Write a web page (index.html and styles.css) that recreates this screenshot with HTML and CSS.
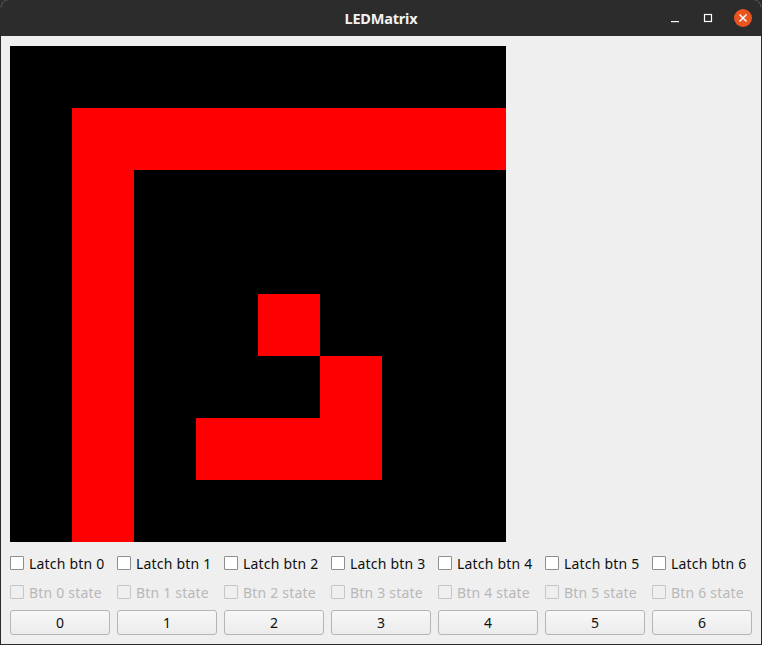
FILE: index.html
```html
<!DOCTYPE html>
<html>
<head>
<meta charset="utf-8">
<link rel="stylesheet" href="styles.css">
</head>
<body>
<div class="window">
  <div class="titlebar">
    <div class="title">LEDMatrix</div>
    <div class="controls">
      <svg class="ctl" width="16" height="16" viewBox="0 0 16 16"><rect x="4" y="11" width="8" height="1.2" fill="#fff"/></svg>
      <svg class="ctl" width="16" height="16" viewBox="0 0 16 16"><rect x="4.5" y="4.5" width="7" height="7" fill="none" stroke="#fff" stroke-width="1.2"/></svg>
      <svg class="ctl close" width="20" height="20" viewBox="0 0 20 20"><circle cx="10" cy="10" r="9" fill="#e95420"/><path d="M6.5 6.5 L13.5 13.5 M13.5 6.5 L6.5 13.5" stroke="#fff" stroke-width="1.5"/></svg>
    </div>
  </div>
  <div class="content">
    <div class="matrix" id="matrix"></div>
    <div class="row latch">
      <label class="cb"><span class="box"></span>Latch btn 0</label>
      <label class="cb"><span class="box"></span>Latch btn 1</label>
      <label class="cb"><span class="box"></span>Latch btn 2</label>
      <label class="cb"><span class="box"></span>Latch btn 3</label>
      <label class="cb"><span class="box"></span>Latch btn 4</label>
      <label class="cb"><span class="box"></span>Latch btn 5</label>
      <label class="cb"><span class="box"></span>Latch btn 6</label>
    </div>
    <div class="row state">
      <label class="cb dis"><span class="box"></span>Btn 0 state</label>
      <label class="cb dis"><span class="box"></span>Btn 1 state</label>
      <label class="cb dis"><span class="box"></span>Btn 2 state</label>
      <label class="cb dis"><span class="box"></span>Btn 3 state</label>
      <label class="cb dis"><span class="box"></span>Btn 4 state</label>
      <label class="cb dis"><span class="box"></span>Btn 5 state</label>
      <label class="cb dis"><span class="box"></span>Btn 6 state</label>
    </div>
    <div class="row buttons">
      <button class="btn">0</button>
      <button class="btn">1</button>
      <button class="btn">2</button>
      <button class="btn">3</button>
      <button class="btn">4</button>
      <button class="btn">5</button>
      <button class="btn">6</button>
    </div>
  </div>
</div>
<script>
var on = [
  "00000000",
  "01111111",
  "01000000",
  "01000000",
  "01001000",
  "01000100",
  "01011100",
  "01000000"
];
var m = document.getElementById("matrix");
on.forEach(function (r) {
  for (var i = 0; i < 8; i++) {
    var d = document.createElement("div");
    d.className = "cell" + (r[i] === "1" ? " lit" : "");
    m.appendChild(d);
  }
});
</script>
</body>
</html>
```
FILE: styles.css
```css
html, body {
  margin: 0;
  padding: 0;
  background: #2c2c2c;
}
.window {
  width: 762px;
  height: 645px;
  box-sizing: border-box;
  background: #efefef;
  border: 1px solid #2a2a2a;
  border-top: none;
  border-radius: 8px 8px 0 0;
  overflow: hidden;
  font-family: "Noto Sans", "Open Sans", sans-serif;
}
.titlebar {
  height: 36px;
  background: #2c2c2c;
  position: relative;
  display: flex;
  align-items: center;
  justify-content: center;
}
.title {
  color: #f2f2f2;
  font-weight: bold;
  font-size: 14.5px;
  letter-spacing: -0.2px;
}
.controls {
  position: absolute;
  right: 8px;
  top: 8px;
  display: flex;
  align-items: center;
  gap: 17px;
}
.ctl { display: block; }
.content {
  padding: 10px 9px 0 9px;
}
.matrix {
  width: 496px;
  height: 496px;
  display: grid;
  grid-template-columns: repeat(8, 62px);
  grid-template-rows: repeat(8, 62px);
  background: #000;
}
.cell { background: #000; }
.cell.lit { background: #ff0000; }
.row {
  display: flex;
  gap: 7px;
}
.latch { margin-top: 13px; }
.state { margin-top: 13px; }
.buttons { margin-top: 10px; }
.cb {
  width: 100px;
  display: flex;
  align-items: center;
  font-size: 14px;
  letter-spacing: 0.2px;
  color: #101010;
  white-space: nowrap;
  height: 16px;
}
.box {
  width: 12px;
  height: 12px;
  border: 1px solid #8e8e8e;
  background: #fff;
  border-radius: 1px;
  margin-right: 5px;
  flex: none;
}
.cb.dis { color: #b8b8b8; }
.cb.dis .box { background: #efefef; border-color: #c6c6c6; }
.btn {
  width: 100px;
  height: 25px;
  margin: 0;
  box-sizing: border-box;
  border: 1px solid #b5b5b5;
  border-radius: 3px;
  background: linear-gradient(#f7f7f7, #ececec);
  font-family: "Noto Sans", "Open Sans", sans-serif;
  font-size: 14px;
  color: #101010;
  padding: 0;
}
```
